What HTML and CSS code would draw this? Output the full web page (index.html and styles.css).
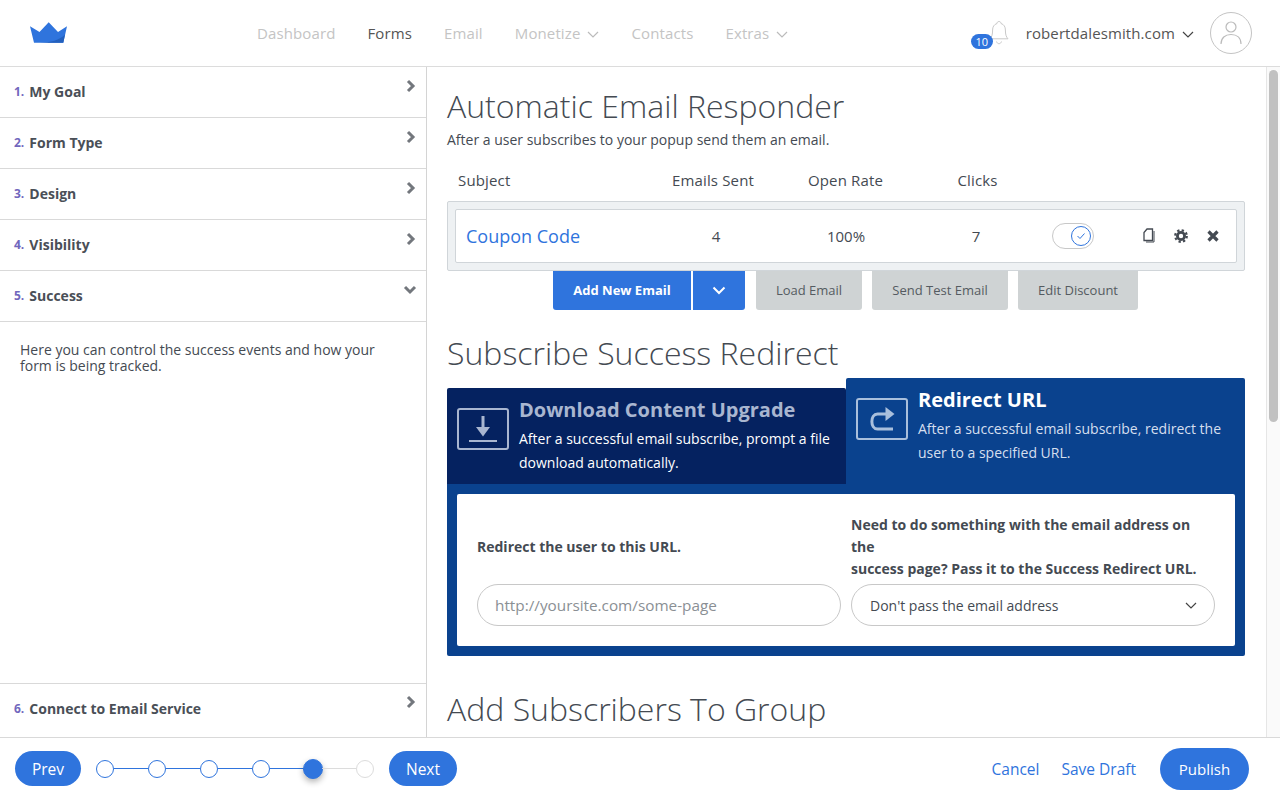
FILE: index.html
```html
<!DOCTYPE html>
<html lang="en">
<head>
  <meta charset="UTF-8" />
  <meta name="viewport" content="width=device-width, initial-scale=1.0" />
  <title>Form Builder - Success</title>
  <link rel="stylesheet" href="styles.css">
</head>
<body>
  <header class="topbar">
    <div class="logo">
      <svg width="38" height="22" viewBox="0 0 38 22">
        <polygon fill="#2f74dd" points="0,4.3 9.5,10 18.7,0.3 28,10 37,4.3 33.3,20.7 4,20.7"/>
        <path fill="#2360bd" d="M10 20.7 C20 20.7 30 18 35 12.5 L33.3 20.7 Z"/>
      </svg>
    </div>
    <nav class="nav">
      <a href="#">Dashboard</a>
      <a href="#" class="active">Forms</a>
      <a href="#">Email</a>
      <a href="#">Monetize <svg class="caret" width="12" height="7" viewBox="0 0 12 7"><path d="M1 1l5 5 5-5" fill="none" stroke="#bbb" stroke-width="1.2"/></svg></a>
      <a href="#">Contacts</a>
      <a href="#">Extras <svg class="caret" width="12" height="7" viewBox="0 0 12 7"><path d="M1 1l5 5 5-5" fill="none" stroke="#bbb" stroke-width="1.2"/></svg></a>
    </nav>
    <div class="account">
      <div class="bell">
        <svg width="20" height="26" viewBox="0 0 20 26">
          <path d="M10 1.5c1.3 0 2 .9 2 2 3 .9 4.4 3.4 4.4 6.5 0 4.5.7 6.800 2.600 8.800H1c1.900-2 2.600-4.300 2.600-8.800 0-3.100 1.400-5.600 4.400-6.500 0-1.100.7-2 2-2z" fill="none" stroke="#c9c9c9" stroke-width="1"/>
          <path d="M7.500 21.500c.5 1.500 1.400 2.200 2.500 2.200s2-.7 2.500-2.200" fill="none" stroke="#c9c9c9" stroke-width="1"/>
        </svg>
        <span class="badge">10</span>
      </div>
      <span class="domain">robertdalesmith.com</span>
      <svg class="domain-caret" width="12" height="7" viewBox="0 0 12 7"><path d="M1 1l5 5 5-5" fill="none" stroke="#444" stroke-width="1.200"/></svg>
      <div class="avatar">
        <svg width="22" height="26" viewBox="0 0 22 26">
          <circle cx="11" cy="7" r="5" fill="none" stroke="#bbb" stroke-width="1.200"/>
          <path d="M1 24c0-6 4-9.500 10-9.500S21 18 21 24" fill="none" stroke="#bbb" stroke-width="1.200"/>
        </svg>
      </div>
    </div>
  </header>

  <div class="workspace">
    <aside class="sidebar">
      <div class="step"><span class="num">1.</span> My Goal<svg class="chev" width="10" height="14" viewBox="0 0 10 14"><path d="M2 2l5 5-5 5" fill="none" stroke="#73777d" stroke-width="3"/></svg></div>
      <div class="step"><span class="num">2.</span> Form Type<svg class="chev" width="10" height="14" viewBox="0 0 10 14"><path d="M2 2l5 5-5 5" fill="none" stroke="#73777d" stroke-width="3"/></svg></div>
      <div class="step"><span class="num">3.</span> Design<svg class="chev" width="10" height="14" viewBox="0 0 10 14"><path d="M2 2l5 5-5 5" fill="none" stroke="#73777d" stroke-width="3"/></svg></div>
      <div class="step"><span class="num">4.</span> Visibility<svg class="chev" width="10" height="14" viewBox="0 0 10 14"><path d="M2 2l5 5-5 5" fill="none" stroke="#73777d" stroke-width="3"/></svg></div>
      <div class="step"><span class="num">5.</span> Success<svg class="chev chev-down" width="14" height="10" viewBox="0 0 14 10"><path d="M2 2l5 5 5-5" fill="none" stroke="#73777d" stroke-width="3"/></svg></div>
      <div class="step-body">Here you can control the success events and how your form is being tracked.</div>
      <div class="step step-last"><span class="num">6.</span> Connect to Email Service<svg class="chev" width="10" height="14" viewBox="0 0 10 14"><path d="M2 2l5 5-5 5" fill="none" stroke="#73777d" stroke-width="3"/></svg></div>
    </aside>

    <main class="content">
      <h2 class="title">Automatic Email Responder</h2>
      <p class="subtitle">After a user subscribes to your popup send them an email.</p>

      <div class="email-head">
        <span class="col-subject">Subject</span>
        <span>Emails Sent</span>
        <span>Open Rate</span>
        <span>Clicks</span>
      </div>
      <div class="email-list">
        <div class="email-row">
          <a href="#" class="email-name">Coupon Code</a>
          <span>4</span>
          <span>100%</span>
          <span>7</span>
          <div class="toggle">
            <span class="knob">
              <svg width="10" height="8" viewBox="0 0 10 8"><path d="M1.500 4l2.500 2.500 4.500-5" fill="none" stroke="#2f74dd" stroke-width="1"/></svg>
            </span>
          </div>
          <div class="row-icons">
            <svg width="14" height="16" viewBox="0 0 14 16">
              <path d="M5 1h5.500v11.500H2V4.500z" fill="none" stroke="#444a52" stroke-width="1.300"/>
              <path d="M12 3v11H4" fill="none" stroke="#444a52" stroke-width="1"/>
            </svg>
            <svg width="14" height="14" viewBox="0 0 14 14">
              <circle cx="7" cy="7" r="3.600" fill="none" stroke="#444a52" stroke-width="2.800"/>
              <circle cx="7" cy="7" r="5.800" fill="none" stroke="#444a52" stroke-width="2.200" stroke-dasharray="2.300 2.250"/>
            </svg>
            <svg width="14" height="14" viewBox="0 0 14 14"><path d="M2.500 2.500l9 9M11.500 2.500l-9 9" fill="none" stroke="#444a52" stroke-width="3.200"/></svg>
          </div>
        </div>
      </div>

      <div class="email-actions">
        <button class="btn btn-primary btn-add">Add New Email</button>
        <button class="btn btn-primary btn-more">
          <svg width="14" height="9" viewBox="0 0 14 9"><path d="M1.500 1.500L7 7l5.500-5.500" fill="none" stroke="#fff" stroke-width="2"/></svg>
        </button>
        <button class="btn btn-grey btn-load">Load Email</button>
        <button class="btn btn-grey btn-test">Send Test Email</button>
        <button class="btn btn-grey btn-discount">Edit Discount</button>
      </div>

      <h2 class="title title-redirect">Subscribe Success Redirect</h2>

      <div class="tabs">
        <div class="tab tab-off">
          <div class="tab-icon">
            <svg width="30" height="32" viewBox="0 0 30 32">
              <path d="M15 3v13" fill="none" stroke="#a9b6d0" stroke-width="3"/>
              <path d="M8 14h14l-7 9.500z" fill="#a9b6d0"/>
              <path d="M1 28h28" stroke="#a9b6d0" stroke-width="2"/>
            </svg>
          </div>
          <div>
            <div class="tab-title">Download Content Upgrade</div>
            <div class="tab-text">After a successful email subscribe, prompt a file download automatically.</div>
          </div>
        </div>
        <div class="tab tab-on">
          <div class="tab-icon">
            <svg width="30" height="32" viewBox="0 0 30 32">
              <path d="M26 26H10.500c-7.500 0-7.500-15 0-15H20" fill="none" stroke="#a9bfdc" stroke-width="3"/>
              <path d="M18.500 4l9 7-9 7z" fill="#a9bfdc"/>
            </svg>
          </div>
          <div>
            <div class="tab-title">Redirect URL</div>
            <div class="tab-text">After a successful email subscribe, redirect the user to a specified URL.</div>
          </div>
        </div>
      </div>
      <div class="tab-panel">
        <div class="panel-form">
          <label class="field-label" for="redirect-url">Redirect the user to this URL.</label>
          <label class="field-label">Need to do something with the email address on the<br>success page? Pass it to the Success Redirect URL.</label>
          <input class="field" id="redirect-url" type="text" placeholder="http://yoursite.com/some-page">
          <div class="field field-select">
            <span>Don't pass the email address</span>
            <svg width="12" height="7" viewBox="0 0 12 7"><path d="M1 1l5 5 5-5" fill="none" stroke="#444" stroke-width="1.200"/></svg>
          </div>
        </div>
      </div>

      <h2 class="title title-group">Add Subscribers To Group</h2>
      <div class="scrollbar"><div class="thumb"></div></div>
    </main>
  </div>

  <footer class="bottombar">
    <button class="pill pill-prev">Prev</button>
    <div class="stepper">
      <span class="dot"></span><span class="link"></span>
      <span class="dot"></span><span class="link"></span>
      <span class="dot"></span><span class="link"></span>
      <span class="dot"></span><span class="link"></span>
      <span class="dot dot-current"></span><span class="link link-off"></span>
      <span class="dot dot-off"></span>
    </div>
    <button class="pill pill-next">Next</button>
    <div class="bottom-right">
      <a href="#">Cancel</a>
      <a href="#">Save Draft</a>
      <button class="pill pill-publish">Publish</button>
    </div>
  </footer>
</body>
</html>
```

FILE: styles.css
```css
* {
  box-sizing: border-box;
}
html, body {
  height: 100%;
}
body {
  margin: 0;
  font-family: "Open Sans", sans-serif;
  color: #444a52;
  background-color: white;
  display: flex;
  flex-direction: column;
  overflow: hidden;
}
button {
  font-family: inherit;
  border: none;
  cursor: pointer;
}
a {
  text-decoration: none;
}

/* top bar */
.topbar {
  height: 67px;
  flex: none;
  display: flex;
  align-items: center;
  border-bottom: 1px solid #dcdcdc;
}
.logo {
  width: 257px;
  padding: 0 0 0 30px;
  display: flex;
}
.nav {
  display: flex;
  gap: 32px;
  font-size: 15px;
  letter-spacing: 0.12px;
}
.nav a {
  color: #c4c4c4;
  display: flex;
  align-items: center;
}
.nav a.active {
  color: #555;
}
.caret {
  margin-left: 7px;
  margin-top: 3px;
}
.account {
  margin-left: auto;
  padding-right: 28px;
  display: flex;
  align-items: center;
}
.bell {
  position: relative;
  width: 20px;
  height: 26px;
  margin-right: 17px;
}
.badge {
  position: absolute;
  left: -18px;
  top: 14px;
  width: 22px;
  height: 15px;
  border-radius: 8px;
  background-color: #2f74dd;
  color: white;
  font-size: 11px;
  line-height: 15px;
  text-align: center;
  letter-spacing: 0;
}
.domain {
  font-size: 15px;
  letter-spacing: 0.1px;
  color: #555;
}
.domain-caret {
  margin: 3px 16px 0 7px;
}
.avatar {
  width: 42px;
  height: 42px;
  border: 1px solid #c4c4c4;
  border-radius: 50%;
  display: flex;
  align-items: center;
  justify-content: center;
}

.workspace {
  flex: 1;
  min-height: 0;
  display: flex;
}

/* left steps */
.sidebar {
  width: 427px;
  flex: none;
  border-right: 1px solid #d4d4d4;
  display: flex;
  flex-direction: column;
}
.step {
  height: 51px;
  flex: none;
  padding: 0 0 2px 14px;
  display: flex;
  align-items: center;
  gap: 5px;
  position: relative;
  border-bottom: 1px solid #d9d9d9;
  font-size: 14px;
  font-weight: 700;
  color: #4a4f57;
}
.num {
  font-size: 12px;
  color: #7167bd;
}
.chev {
  position: absolute;
  right: 10px;
  top: 12px;
}
.chev-down {
  right: 9px;
  top: 14px;
}
.step-body {
  flex: 1;
  padding: 20px 40px 0 20px;
  font-size: 14px;
  line-height: 16px;
}
.step-last {
  border-top: 1px solid #d9d9d9;
  border-bottom: none;
  height: 52px;
  margin-bottom: 2px;
}
.step-last .chev {
  top: 11px;
}

/* main column */
.content {
  flex: 1;
  position: relative;
  overflow: hidden;
  padding: 0 35px 0 20px;
}
.title {
  margin: 0;
  font-size: 32px;
  font-weight: 300;
  line-height: 44px;
  color: #444a52;
}
.content > .title:first-child {
  margin-top: 17px;
}
.subtitle {
  margin: 3px 0 0;
  font-size: 14px;
  line-height: 18px;
}
.email-head {
  display: grid;
  grid-template-columns: 189px 132px 133px 131px;
  margin-top: 21px;
  padding-left: 11px;
  font-size: 15px;
  letter-spacing: 0.15px;
  line-height: 20px;
  text-align: center;
}
.col-subject {
  text-align: left;
}
.email-list {
  margin-top: 11px;
  height: 70px;
  padding: 7px;
  background-color: #eef1f3;
  border: 1px solid #d0d5d9;
  border-radius: 2px;
}
.email-row {
  height: 54px;
  padding-left: 10px;
  display: grid;
  grid-template-columns: 185px 130px 130px 130px 72px 1fr;
  align-items: center;
  text-align: center;
  font-size: 15px;
  background-color: white;
  border: 1px solid #d0d5d9;
  border-radius: 2px;
}
.email-name {
  text-align: left;
  font-size: 18px;
  color: #2f74dd;
}
.toggle {
  width: 42px;
  height: 26px;
  margin-left: 11px;
  border: 1px solid #c8c8c8;
  border-radius: 13px;
  display: flex;
  justify-content: flex-end;
  align-items: center;
  padding-right: 2px;
}
.knob {
  width: 20px;
  height: 20px;
  border: 1px solid #2f74dd;
  border-radius: 50%;
  display: flex;
  align-items: center;
  justify-content: center;
}
.row-icons {
  display: flex;
  justify-content: flex-end;
  align-items: center;
  gap: 18px;
  padding-right: 16px;
}

.email-actions {
  display: flex;
  padding-left: 106px;
  height: 39px;
}
.btn {
  height: 39px;
  padding-bottom: 3px;
  font-size: 13px;
  border-radius: 0 0 3px 3px;
}
.btn-primary {
  background-color: #2f74dd;
  color: white;
  font-weight: 700;
}
.btn-grey {
  background-color: #cfd3d4;
  color: #555b61;
  margin-left: 10px;
}
.btn-add {
  width: 138px;
  border-radius: 0 0 0 3px;
  margin-right: 2px;
}
.btn-more {
  width: 52px;
  border-radius: 0 0 3px 0;
  padding: 0 0 1px;
  margin-right: 1px;
}
.btn-load {
  width: 106px;
}
.btn-test {
  width: 136px;
}
.btn-discount {
  width: 120px;
}
.title-redirect {
  margin-top: 21px;
}

/* redirect tabs */
.tabs {
  display: grid;
  grid-template-columns: 399px 399px;
  align-items: end;
  margin-top: 3px;
}
.tab {
  display: flex;
  gap: 10px;
  padding: 10px;
  color: white;
  border-radius: 2px 2px 0 0;
}
.tab-off {
  height: 96px;
  background-color: #052260;
}
.tab-on {
  height: 106px;
  background-color: #0a428e;
}
.tab-icon {
  width: 52px;
  height: 42px;
  flex: none;
  margin-top: 10px;
  border: 2px solid #a9b6d0;
  border-radius: 3px;
  display: flex;
  align-items: center;
  justify-content: center;
}
.tab-on .tab-icon {
  border-color: #a9bfdc;
}
.tab-title {
  font-size: 20px;
  line-height: 24px;
  font-weight: 700;
}
.tab-off .tab-title {
  color: #a9b6d0;
}
.tab-text {
  margin-top: 5px;
  font-size: 14px;
  line-height: 24px;
}
.tab-on .tab-text {
  color: #d5dfee;
}
.tab-panel {
  padding: 10px;
  background-color: #0a428e;
  border-radius: 0 0 2px 2px;
}
.panel-form {
  background-color: white;
  border-radius: 2px;
  padding: 20px;
  display: grid;
  grid-template-columns: 364px 364px;
  column-gap: 10px;
  row-gap: 4px;
  align-items: center;
}
.field-label {
  font-size: 14px;
  line-height: 22px;
  font-weight: 700;
}
.field {
  height: 42px;
  width: 100%;
  padding: 0 17px;
  border: 1px solid #c8c8c8;
  border-radius: 21px;
  font-family: inherit;
  font-size: 15.300px;
  color: #444a52;
  outline: none;
}
.field::placeholder {
  color: #8a8f94;
}
.field-select {
  font-size: 14px;
  padding-left: 18px;
  display: flex;
  align-items: center;
  justify-content: space-between;
}
.title-group {
  margin-top: 31px;
}

.scrollbar {
  position: absolute;
  top: 0;
  right: 0;
  bottom: 0;
  width: 14px;
  padding: 3px 2px;
  background-color: #fafafa;
  border-left: 1px solid #e6e6e6;
}
.thumb {
  height: 352px;
  border-radius: 5px;
  background-color: #c1c1c1;
}

/* bottom bar */
.bottombar {
  height: 63px;
  flex: none;
  display: flex;
  align-items: center;
  padding: 0 31px 1px 15px;
  border-top: 1px solid #d9d9d9;
}
.pill {
  height: 35px;
  border-radius: 18px;
  background-color: #2f74dd;
  color: white;
  font-size: 15.500px;
}
.pill-prev {
  width: 66px;
}
.pill-next {
  width: 68px;
}
.stepper {
  display: flex;
  align-items: center;
  margin: 0 15px;
}
.dot {
  width: 18px;
  height: 18px;
  flex: none;
  border: 1px solid #2f74dd;
  border-radius: 50%;
}
.dot-current {
  width: 20px;
  height: 20px;
  margin: 0 -1px;
  background-color: #2f74dd;
  box-shadow: 0 3px 6px rgba(0, 0, 0, 0.3);
}
.dot-off {
  border-color: #dcdcdc;
}
.link {
  width: 34px;
  height: 1px;
  background-color: #2f74dd;
}
.link-off {
  background-color: #dcdcdc;
}
.bottom-right {
  margin-left: auto;
  display: flex;
  align-items: center;
  gap: 23px;
  font-size: 15.500px;
}
.bottom-right a {
  color: #2f74dd;
}
.bottom-right a + a {
  margin-left: -1px;
}
.pill-publish {
  width: 89px;
  height: 42px;
  border-radius: 21px;
  margin: 1px 0 0 1px;
  font-size: 15px;
}
```
